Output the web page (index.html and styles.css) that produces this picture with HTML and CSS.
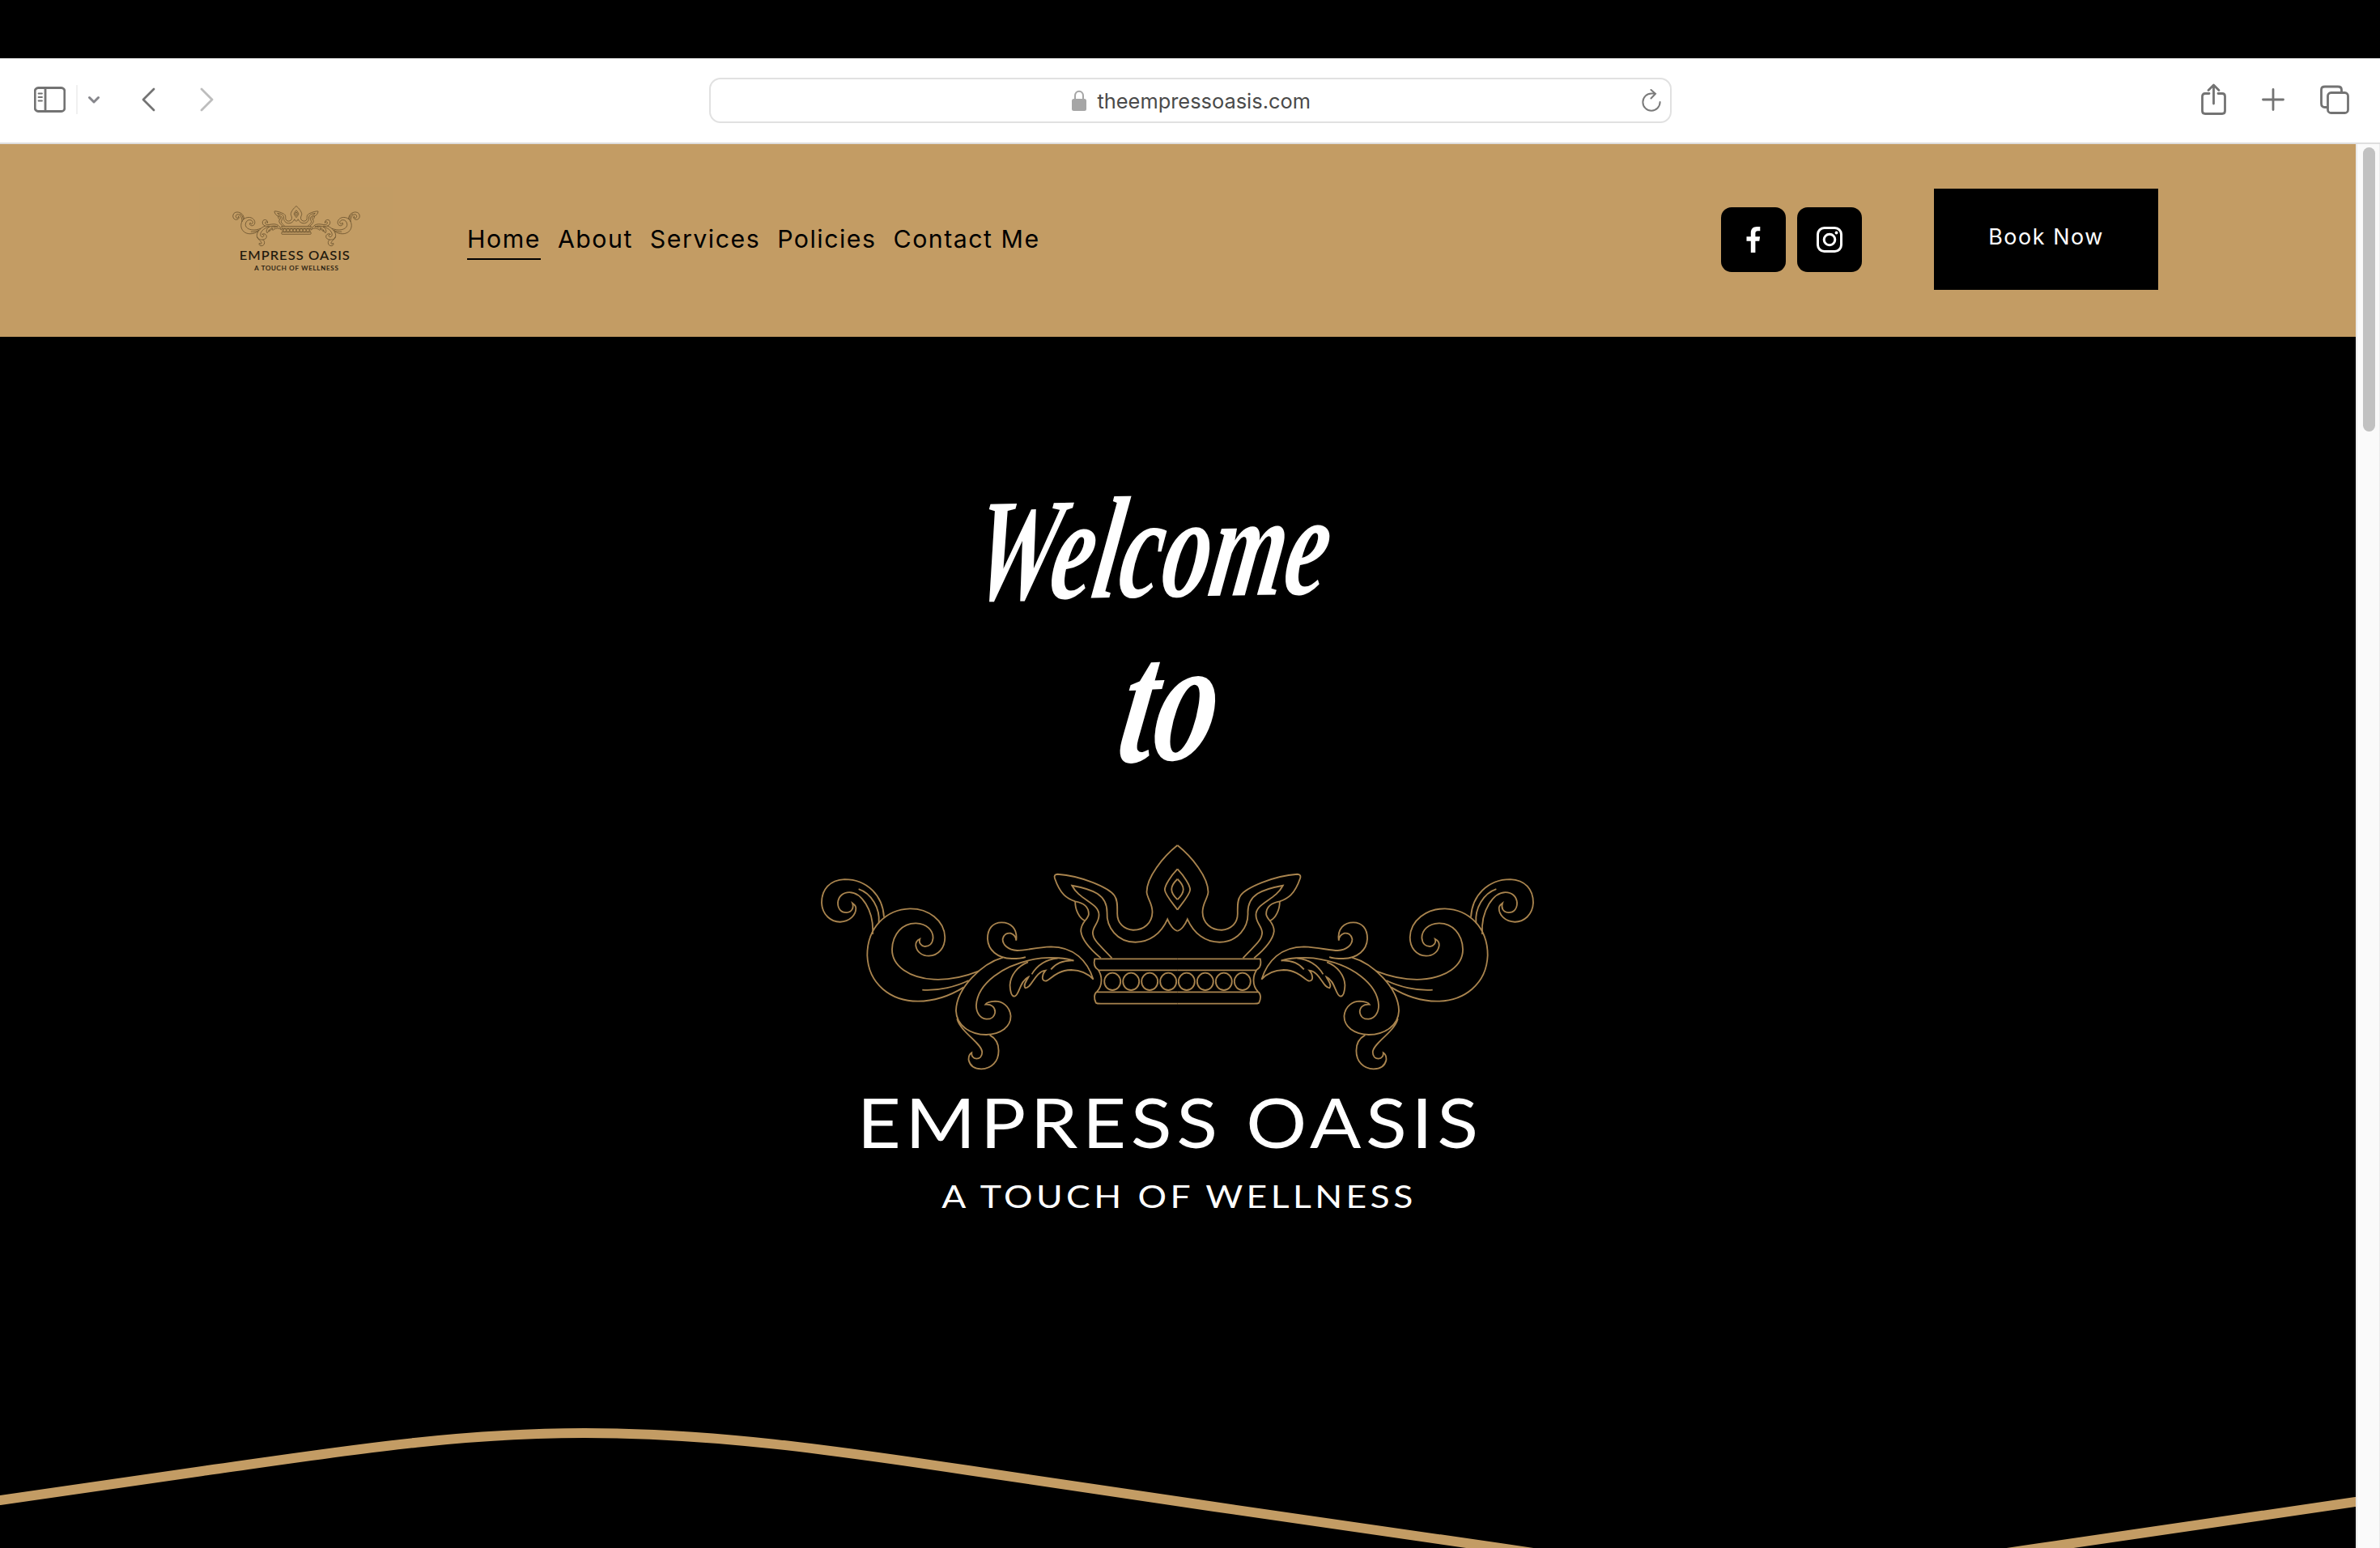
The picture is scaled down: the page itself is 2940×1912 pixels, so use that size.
FILE: index.html
```html
<!DOCTYPE html>
<html lang="en">
<head>
    <meta charset="UTF-8">
    <title>Empress Oasis</title>
    <link rel="stylesheet" href="styles.css">
</head>
<body>
    <!-- shared crown drawing, left half is mirrored for the right side -->
    <svg class="defs" width="0" height="0">
        <defs>
            <g id="half">
                <path d="M276 308C272 230 215 168 130 168C75 170 45 205 45 255C47 300 80 326 113 326C150 324 172 300 172 275C172 265 165 260 159 256C165 272 158 290 137 291C115 291 105 275 105 255C107 230 125 216 148 216C190 216 240 280 234 372"/>
                <path d="M182 204C230 220 262 275 257 330"/>
                <path d="M628 508C560 535 500 541 460 539C370 533 306 490 306 428C308 370 345 330 395 331C435 333 458 357 458 385C456 408 442 417 428 417C412 415 404 402 409 389C398 394 393 402 394 414C398 438 418 452 442 452C480 450 502 420 502 383C500 320 440 276 372 277C285 280 214 345 214 450C218 555 300 620 402 620C465 620 520 600 572 568"/>
                <path d="M418 578C480 582 545 565 590 543"/>
                <path d="M717 458C640 480 545 570 543 655C545 710 595 744 655 744C710 742 746 715 746 675C742 635 712 620 688 620C670 621 656 625 652 632C675 630 688 642 688 660C686 678 672 687 655 686C632 683 618 662 618 635C622 560 710 480 860 460C900 456 950 460 980 470"/>
                <path d="M810 475C770 490 745 525 743 560C744 585 750 602 760 602C778 600 778 545 812 530C805 545 790 560 800 571C825 571 835 510 875 506C862 520 858 545 875 545C890 545 910 506 970 504C1010 505 1035 520 1052 539C1030 470 980 418 895 418C840 420 800 432 770 432C735 430 716 410 716 390C720 372 733 366 745 368C758 372 765 380 766 395C772 350 745 328 712 328C680 328 660 350 660 388C662 430 695 460 750 462C770 462 790 460 801 456"/>
                <path d="M824 520C845 485 880 465 920 461M895 502C912 480 940 468 978 469"/>
                <path d="M547 685C560 735 638 775 640 808C640 825 630 833 619 833C606 832 600 822 601 811C592 817 589 825 590 838C595 860 612 871 637 871C675 871 701 843 701 803C701 775 690 757 668 745"/>
                <path d="M1364 42C1310 85 1250 160 1250 215C1252 240 1271 255 1271 290C1270 330 1240 356 1200 356C1165 354 1141 330 1141 295C1141 270 1143 245 1130 228C1110 200 1010 155 920 149C910 149 906 155 909 164C930 225 955 240 985 250C1020 256 1035 275 1035 297C1033 318 1006 325 1006 360C1010 395 1050 435 1080 460"/>
                <path d="M985 250C984 280 1000 312 1020 321"/>
                <path d="M1121 460C1080 415 1050 395 1050 365C1052 340 1073 330 1073 300C1073 255 1000 245 973 191C1050 205 1103 225 1103 290C1100 345 1140 401 1208 401C1260 401 1303 370 1327 316C1335 335 1350 358 1364 359"/>
                <path d="M1364 130C1340 155 1317 190 1317 207C1318 225 1345 255 1364 281M1364 167C1335 195 1335 215 1364 243"/>
                <path d="M1364 463H1057C1053 480 1056 495 1070 503C1085 525 1088 560 1066 584C1055 590 1053 610 1062 626Q1066 629 1080 629H1364M1364 505H1070M1364 586H1066"/>
                <ellipse cx="1123" cy="547" rx="30" ry="32"/>
                <ellipse cx="1192" cy="547" rx="30" ry="32"/>
                <ellipse cx="1261" cy="547" rx="30" ry="32"/>
                <ellipse cx="1330" cy="547" rx="30" ry="32"/>
            </g>
            <g id="crown">
                <use href="#half"/>
                <use href="#half" transform="translate(2728 0) scale(-1 1)"/>
            </g>
        </defs>
    </svg>

    <div class="toolbar">
        <div class="tools">
            <svg width="39" height="40" viewBox="0 0 39 40" class="icon">
                <rect x="1.2" y="5.5" width="36.6" height="29" rx="4"/>
                <path d="M14 5.5V34.5"/>
                <path class="thin" d="M5.5 12.5H10M5.5 17H10M5.5 21.5H10"/>
            </svg>
            <span class="divider"></span>
            <svg width="14" height="40" viewBox="0 0 14 40" class="icon bold"><path d="M1.5 17.5L7 23L12.5 17.5"/></svg>
            <svg width="17" height="40" viewBox="0 0 17 40" class="icon back"><path d="M15 7L2 20L15 33"/></svg>
            <svg width="17" height="40" viewBox="0 0 17 40" class="icon forward"><path d="M2 7L15 20L2 33"/></svg>
        </div>
        <div class="address">
            <svg class="lock" width="18" height="26" viewBox="0 0 18 26">
                <path d="M4 12V7.5C4 -.3 14 -.3 14 7.5V12" fill="none" stroke="#a6a6a6" stroke-width="2"/>
                <rect x="0" y="11" width="18" height="15" rx="2.5" fill="#a6a6a6"/>
            </svg>
            <span>theempressoasis.com</span>
            <svg class="reload" width="24" height="28" viewBox="0 0 24 28">
                <path d="M22.6 16A10.6 10.6 0 1 1 12 5.5H16.5M11.5 1L17 5.8L11.5 11.5"/>
            </svg>
        </div>
        <div class="tools right">
            <svg width="31" height="40" viewBox="0 0 31 40" class="icon">
                <path d="M10 12.5H5Q1.5 12.5 1.5 16V34Q1.5 37.5 5 37.5H26Q29.5 37.5 29.5 34V16Q29.5 12.5 26 12.5H21M15.5 25V2.5M9 8.5L15.5 2L22 8.5"/>
            </svg>
            <svg width="28" height="40" viewBox="0 0 28 40" class="icon"><path d="M1.5 20H26.5M14 7.5V32.5"/></svg>
            <svg width="36" height="40" viewBox="0 0 36 40" class="icon">
                <path d="M9 29.5H6Q1.5 29.5 1.5 25V8Q1.5 4 6 4H22Q26.5 4 26.5 8V11"/>
                <rect x="9.5" y="11.5" width="25" height="25" rx="4"/>
            </svg>
        </div>
    </div>

    <div class="window">
        <div class="page">
            <header class="header">
                <a class="brand">
                    <svg class="small-logo" viewBox="0 0 2728 1500">
                        <use href="#crown"/>
                        <text class="name" x="180" y="1163" textLength="2310" lengthAdjust="spacingAndGlyphs">EMPRESS OASIS</text>
                        <text class="tagline" x="492" y="1387" textLength="1757" lengthAdjust="spacingAndGlyphs">A TOUCH OF WELLNESS</text>
                    </svg>
                </a>
                <nav class="nav">
                    <a class="active">Home</a>
                    <a>About</a>
                    <a>Services</a>
                    <a>Policies</a>
                    <a>Contact Me</a>
                </nav>
                <div class="social">
                    <a>
                        <svg width="32" height="32" viewBox="0 0 32 32"><path fill="#fff" d="M12.8 32V17.8H7.5V12.2H12.8V7.8C12.8 2.7 15.7 0 20.3 0H24.3V5.2H21.4C19 5.2 18.4 6.5 18.4 8.3V12.2H24.1L23.3 17.8H18.4V32Z"/></svg>
                    </a>
                    <a>
                        <svg width="32" height="32" viewBox="0 0 32 32" fill="none" stroke="#fff" stroke-width="3">
                            <rect x="1.5" y="1.5" width="29" height="29" rx="8"/>
                            <circle cx="16" cy="16" r="6.8"/>
                            <circle cx="24.5" cy="7.5" r="1.9" fill="#fff" stroke="none"/>
                        </svg>
                    </a>
                </div>
                <a class="book">Book Now</a>
            </header>

            <main class="hero">
                <svg class="welcome" width="550" height="400" viewBox="0 0 550 400">
                    <text transform="translate(16 161) rotate(-1) skewX(-10)" textLength="438" lengthAdjust="spacingAndGlyphs">Welcome</text>
                    <text class="to" transform="translate(196 362) rotate(-3) skewX(-12)" textLength="120" lengthAdjust="spacingAndGlyphs">to</text>
                </svg>
                <svg class="logo" viewBox="0 0 2728 1500">
                    <use href="#crown"/>
                    <text class="name" x="176" y="1163" textLength="2320" lengthAdjust="spacingAndGlyphs">EMPRESS OASIS</text>
                    <text class="tagline" x="490" y="1387" textLength="1760" lengthAdjust="spacingAndGlyphs">A TOUCH OF WELLNESS</text>
                </svg>
                <svg class="wave" width="2910" height="172" viewBox="0 1740 2910 172">
                    <path d="M-20 1856L0 1853L250 1817C420 1793 560 1770 722 1770C880 1770 1030 1791 1196 1816L1500 1861L1853 1912C2000 1934 2100 1945 2180 1945C2280 1945 2400 1930 2520 1912L2910 1855L2930 1852"/>
                </svg>
            </main>
        </div>
        <div class="scrollbar"><div class="thumb"></div></div>
    </div>
</body>
</html>
```
FILE: styles.css
```css
*{
    box-sizing: border-box;
    margin: 0;
    padding: 0;
}
body{
    width: 2940px;
    height: 1912px;
    padding-top: 72px;
    background-color: black;
    font-family: Inter, "Liberation Sans", sans-serif;
    overflow: hidden;
}
svg{
    display: block;
    flex-shrink: 0;
}
.defs{
    position: absolute;
}

/* browser bar */
.toolbar{
    height: 106px;
    display: grid;
    grid-template-columns: 1fr 1189px 1fr;
    align-items: center;
    background-color: white;
    border-bottom: 2px solid #dedede;
}
.tools{
    display: flex;
    align-items: center;
    padding-left: 42px;
    padding-bottom: 3px;
}
.tools.right{
    justify-content: flex-end;
    gap: 44px;
    padding-right: 38px;
}
.icon{
    fill: none;
    stroke: #737373;
    stroke-width: 2.8;
    stroke-linecap: round;
    stroke-linejoin: round;
}
.icon .thin{
    stroke-width: 1.8;
}
.icon.bold{
    stroke: #86868b;
    stroke-width: 3;
}
.divider{
    width: 2px;
    height: 36px;
    margin: 0 13px;
    background-color: #f0f0f0;
}
.back{
    margin-left: 52px;
}
.icon.forward{
    margin-left: 55px;
    stroke: #bdbdbd;
}
.address{
    height: 56px;
    display: flex;
    align-items: center;
    border: 2px solid #e1e1e1;
    border-radius: 14px;
    color: #4a4a4a;
    font-size: 25.4px;
}
.lock{
    margin-left: 446px;
    margin-right: 14px;
}
.reload{
    margin-left: auto;
    margin-right: 11px;
    fill: none;
    stroke: #7a7a7a;
    stroke-width: 2;
    stroke-linecap: round;
}

.window{
    display: flex;
    height: 1734px;
}
.page{
    width: 2910px;
    display: flex;
    flex-direction: column;
}
.scrollbar{
    width: 30px;
    padding: 4px 5px 0 7px;
    background-color: #fafafa;
    border-left: 2px solid #ebebeb;
    border-right: 1px solid #ebebeb;
}
.thumb{
    height: 351px;
    border-radius: 8px;
    background-color: #c1c1c1;
}

/* site header */
.header{
    height: 238px;
    display: flex;
    align-items: center;
    padding: 0 244px 3px 246px;
    background-color: #c39c64;
}
.brand{
    width: 240px;
    height: 133px;
    display: flex;
    justify-content: center;
    margin-top: 4px;
    padding-top: 21px;
    background-color: #c29c64;
}
.small-logo{
    width: 162px;
    height: 89px;
    fill: none;
    stroke: #5c4726;
    stroke-width: 12;
}
.name, .tagline{
    font-family: Lato, sans-serif;
    letter-spacing: 0.06em;
}
.name{
    font-size: 254px;
}
.tagline{
    font-size: 117px;
    letter-spacing: 0.1em;
}
.small-logo text{
    fill: #1c160c;
    stroke: #1c160c;
    stroke-width: 3;
}
.nav{
    display: flex;
    gap: 21px;
    margin-left: 91px;
    margin-bottom: 10px;
    font-size: 30.3px;
    letter-spacing: 1.5px;
}
.nav a{
    padding: 14px 0 4px;
    line-height: 40px;
    border-bottom: 2px solid transparent;
}
.nav .active{
    border-color: black;
}
.social{
    display: flex;
    gap: 14px;
    margin-left: auto;
}
.social a{
    width: 80px;
    height: 80px;
    display: flex;
    align-items: center;
    justify-content: center;
    border-radius: 13px;
    background-color: black;
}
.book{
    width: 277px;
    height: 125px;
    margin-left: 89px;
    line-height: 120px;
    text-align: center;
    font-size: 27px;
    letter-spacing: 1.5px;
    color: white;
    background-color: black;
}

/* hero */
.hero{
    flex: 1;
    display: flex;
    flex-direction: column;
    align-items: center;
    padding-top: 164px;
    background-color: black;
}
.welcome{
    overflow: visible;
    fill: white;
    font-family: "Liberation Serif", serif;
    font-style: italic;
    font-weight: bold;
    font-size: 180px;
}
.welcome .to{
    font-size: 215px;
}
.logo{
    width: 909px;
    height: 500px;
    margin-top: 50px;
    margin-right: 1px;
    fill: none;
    stroke: #a9844e;
    stroke-width: 5.5;
}
.logo text{
    fill: white;
    stroke: none;
}
.wave{
    margin-top: auto;
    fill: none;
    stroke: #c39c64;
    stroke-width: 12;
}
```
